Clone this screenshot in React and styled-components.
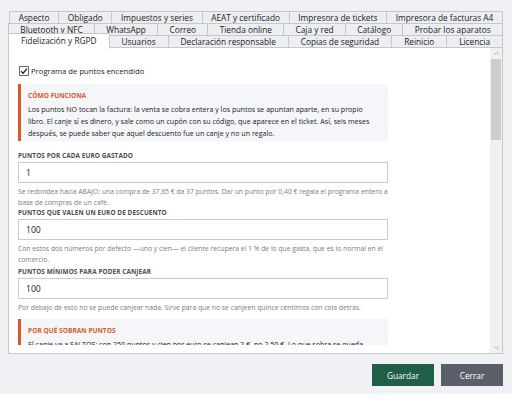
import React, { useState } from "react";
import styled, { createGlobalStyle } from "styled-components";

const GlobalStyle = createGlobalStyle`
  html, body {
    margin: 0;
    padding: 0;
    background: #ffffff;
  }
  body {
    font-family: "Open Sans", "Noto Sans", sans-serif;
    color: #222;
  }
  * {
    box-sizing: border-box;
  }
`;

const Window = styled.div`
  width: 512px;
  height: 394px;
  background: #eff1f4;
  padding: 11px 9px 0 8px;
  display: flex;
  flex-direction: column;
`;

const TabStrip = styled.div`
  display: flex;
  flex-direction: column;
  position: relative;
  z-index: 2;
`;

const TabRow = styled.div`
  display: flex;
  align-items: flex-start;
  height: 13px;
  margin-top: ${(p) => (p.$first ? 0 : -1)}px;
  padding-left: ${(p) => p.$inset || 0}px;
`;

const Tab = styled.div`
  flex: 1 0 auto;
  height: ${(p) => (p.$active ? 16 : 13)}px;
  margin-top: ${(p) => (p.$active ? -2 : 0)}px;
  margin-left: -1px;
  padding: ${(p) => (p.$active ? "1px" : "0")} 6px 0;
  border: 1px solid #c5c7ca;
  border-bottom-color: ${(p) => (p.$active ? "#ffffff" : "#c5c7ca")};
  background: ${(p) => (p.$active ? "#ffffff" : "#eceef1")};
  position: relative;
  z-index: ${(p) => (p.$active ? 3 : 1)};
  font-size: 8.3px;
  line-height: 11px;
  text-align: center;
  white-space: nowrap;
  color: #222;
  cursor: default;

  &:first-child {
    margin-left: 0;
  }
`;

const Panel = styled.div`
  flex: 1;
  min-height: 0;
  margin-top: -1px;
  border: 1px solid #c5c7ca;
  background: #ffffff;
  display: flex;
  position: relative;
  z-index: 1;
`;

/* the page body is clipped here; the bar on the right stands in for the native one */
const Scroll = styled.div`
  flex: 1;
  overflow: hidden;
  margin-bottom: 8px;
`;

const ScrollBar = styled.div`
  width: 12px;
  display: flex;
  flex-direction: column;
  background: #f0f0f0;
`;

const ScrollArrow = styled.div`
  height: 11px;
  display: flex;
  align-items: center;
  justify-content: center;
`;

const ScrollTrack = styled.div`
  flex: 1;
  padding: 0 1px;
`;

const Thumb = styled.div`
  height: 81px;
  background: #cdcdcd;
`;

const Content = styled.div`
  width: 380px;
  padding: 17px 0 14px 9px;
`;

const CheckRow = styled.label`
  display: flex;
  align-items: center;
  gap: 2px;
  height: 12px;
  margin-top: ${(p) => p.$top || 0}px;
  font-size: 7.7px;
  color: #1e1e1e;
  cursor: pointer;
`;

const Box = styled.span`
  width: 10px;
  height: 10px;
  margin-left: 1px;
  border: 1px solid #6d6d6d;
  background: #fff;
  display: flex;
  align-items: center;
  justify-content: center;
`;

const Callout = styled.div`
  margin-top: ${(p) => p.$top || 0}px;
  width: 370px;
  background: #f4f6f9;
  border-left: 3px solid #d9592b;
  padding: 7px 12px 2px 7px;
`;

const CalloutTitle = styled.div`
  font-size: 6.6px;
  font-weight: 700;
  line-height: 10px;
  color: #d9592b;
  margin-bottom: 2px;
`;

const CalloutText = styled.p`
  margin: 0;
  font-size: 7.1px;
  line-height: 12px;
  color: #222;
`;

const FieldLabel = styled.div`
  margin-top: ${(p) => p.$top || 0}px;
  font-size: 6.4px;
  font-weight: 700;
  line-height: 10px;
  color: #4a4d52;
  letter-spacing: 0.1px;
`;

const Input = styled.input`
  display: block;
  width: 370px;
  height: 21px;
  margin-top: 1px;
  padding: 0 7px;
  border: 1px solid #c9cbce;
  border-radius: 0;
  font-family: inherit;
  font-size: 8.6px;
  color: #222;
  background: #fff;
  outline: none;
`;

const TextArea = styled.textarea`
  display: block;
  width: 370px;
  height: 64px;
  margin-top: 1px;
  padding: 5px 7px;
  border: 1px solid #c9cbce;
  font-family: inherit;
  font-size: 7.2px;
  line-height: 11px;
  color: #222;
  resize: none;
  outline: none;
`;

const Help = styled.p`
  margin: 3px 0 0;
  width: 370px;
  font-size: 6.8px;
  line-height: 11px;
  color: #7a7d82;
`;

const Footer = styled.div`
  display: flex;
  justify-content: flex-end;
  gap: 7px;
  padding: 10px 0 8px;
`;

const Button = styled.button`
  width: 62px;
  height: 22px;
  border: none;
  border-radius: 0;
  background: ${(p) => (p.$primary ? "#1f5e47" : "#5a5f69")};
  color: #ffffff;
  font-family: inherit;
  font-size: 8.3px;
  cursor: pointer;

  &:hover {
    filter: brightness(1.1);
  }
`;

const tabRows = [
  ["Aspecto", "Obligado", "Impuestos y series", "AEAT y certificado", "Impresora de tickets", "Impresora de facturas A4"],
  ["Bluetooth y NFC", "WhatsApp", "Correo", "Tienda online", "Caja y red", "Catálogo", "Probar los aparatos"],
  ["Fidelización y RGPD", "Usuarios", "Declaración responsable", "Copias de seguridad", "Reinicio", "Licencia"],
];

const Check = ({ checked }) => (
  <Box>
    {checked && (
      <svg width="8" height="8" viewBox="0 0 8 8">
        <path d="M1 4.2 3.1 6.2 7 1.6" fill="none" stroke="#222" strokeWidth="1.3" />
      </svg>
    )}
  </Box>
);

const Chevron = ({ down }) => (
  <svg width="7" height="7" viewBox="0 0 8 8">
    <path d={down ? "M1.5 2.8 4 5.2 6.5 2.8" : "M1.5 5.2 4 2.8 6.5 5.2"} fill="none" stroke="#a3a3a3" strokeWidth="1" />
  </svg>
);

const App = () => {
  const [active, setActive] = useState("Fidelización y RGPD");
  const [enabled, setEnabled] = useState(true);
  const [consent, setConsent] = useState(true);
  const [signature, setSignature] = useState(false);
  const [perEuro, setPerEuro] = useState("1");
  const [perDiscount, setPerDiscount] = useState("100");
  const [minimum, setMinimum] = useState("100");
  const [expiry, setExpiry] = useState("24");
  const [keepDays, setKeepDays] = useState("30");

  return (
    <>
      <GlobalStyle />
      <Window>
        <TabStrip>
          {tabRows.map((row, i) => (
            <TabRow key={i} $first={i === 0} $inset={i === 0 ? 1 : 0}>
              {row.map((name) => (
                <Tab key={name} $active={name === active} onClick={() => setActive(name)}>
                  {name}
                </Tab>
              ))}
            </TabRow>
          ))}
        </TabStrip>

        <Panel>
          <Scroll>
            <Content>
              <CheckRow onClick={() => setEnabled(!enabled)}>
                <Check checked={enabled} />
                Programa de puntos encendido
              </CheckRow>

              <Callout $top={7}>
                <CalloutTitle>CÓMO FUNCIONA</CalloutTitle>
                <CalloutText>
                  Los puntos NO tocan la factura: la venta se cobra entera y los puntos se apuntan aparte, en su propio
                  libro. El canje sí es dinero, y sale como un cupón con su código, que aparece en el ticket. Así, seis meses
                  después, se puede saber que aquel descuento fue un canje y no un regalo.
                </CalloutText>
              </Callout>

              <FieldLabel $top={10}>PUNTOS POR CADA EURO GASTADO</FieldLabel>
              <Input value={perEuro} onChange={(e) => setPerEuro(e.target.value)} />
              <Help>
                Se redondea hacia ABAJO: una compra de 37,85 € da 37 puntos. Dar un punto por 0,40 € regala el programa entero a
                base de compras de un café.
              </Help>

              <FieldLabel $top={0}>PUNTOS QUE VALEN UN EURO DE DESCUENTO</FieldLabel>
              <Input value={perDiscount} onChange={(e) => setPerDiscount(e.target.value)} />
              <Help>
                Con estos dos números por defecto —uno y cien— el cliente recupera el 1 % de lo que gasta, que es lo normal en el
                comercio.
              </Help>

              <FieldLabel $top={2}>PUNTOS MÍNIMOS PARA PODER CANJEAR</FieldLabel>
              <Input value={minimum} onChange={(e) => setMinimum(e.target.value)} />
              <Help>Por debajo de esto no se puede canjear nada. Sirve para que no se canjeen quince céntimos con cola detrás.</Help>

              <Callout $top={6}>
                <CalloutTitle>POR QUÉ SOBRAN PUNTOS</CalloutTitle>
                <CalloutText>
                  El canje va a SALTOS: con 250 puntos y cien por euro se canjean 2 €, no 2,50 €. Lo que sobra se queda para
                  el próximo canje: ni se pierde ni se redondea a favor de nadie.
                </CalloutText>
              </Callout>

              <FieldLabel $top={9}>MESES HASTA QUE CADUCAN LOS PUNTOS</FieldLabel>
              <Input value={expiry} onChange={(e) => setExpiry(e.target.value)} />
              <Help>
                Cuentan desde la última compra, no desde la primera. Con un cero no caducan nunca, pero el libro de puntos no
                deja de crecer.
              </Help>

              <Callout $top={9}>
                <CalloutTitle>RGPD</CalloutTitle>
                <CalloutText>
                  Para apuntar puntos hace falta saber quién es el cliente, y eso ya es un dato personal. Aquí se decide qué se
                  le pide al darle de alta, qué se le explica y cuánto tiempo se guardan sus datos cuando se da de baja.
                </CalloutText>
              </Callout>

              <CheckRow $top={10} onClick={() => setConsent(!consent)}>
                <Check checked={consent} />
                Pedir el consentimiento al dar de alta un cliente
              </CheckRow>
              <CheckRow $top={6} onClick={() => setSignature(!signature)}>
                <Check checked={signature} />
                Guardar la firma del cliente junto al consentimiento
              </CheckRow>

              <FieldLabel $top={10}>TEXTO DE LA CLÁUSULA INFORMATIVA</FieldLabel>
              <TextArea
                readOnly
                value="Sus datos se usan solo para gestionar el programa de puntos de este comercio. No se ceden a nadie. Puede pedir verlos, corregirlos o borrarlos en cualquier momento en caja."
              />
              <Help>Se imprime al pie del justificante de alta y se muestra en la tienda online, si está encendida.</Help>

              <FieldLabel $top={1}>DÍAS QUE SE GUARDAN LOS DATOS DE UN CLIENTE DADO DE BAJA</FieldLabel>
              <Input value={keepDays} onChange={(e) => setKeepDays(e.target.value)} />
              <Help>
                Pasado este plazo se borran el nombre, el teléfono y el correo. Las facturas se quedan, porque Hacienda obliga a
                guardarlas, pero ya sin nada que lleve hasta la persona.
              </Help>
            </Content>
          </Scroll>

          <ScrollBar>
            <ScrollArrow>
              <Chevron />
            </ScrollArrow>
            <ScrollTrack>
              <Thumb />
            </ScrollTrack>
            <ScrollArrow>
              <Chevron down />
            </ScrollArrow>
          </ScrollBar>
        </Panel>

        <Footer>
          <Button $primary>Guardar</Button>
          <Button>Cerrar</Button>
        </Footer>
      </Window>
    </>
  );
};

export default App;
